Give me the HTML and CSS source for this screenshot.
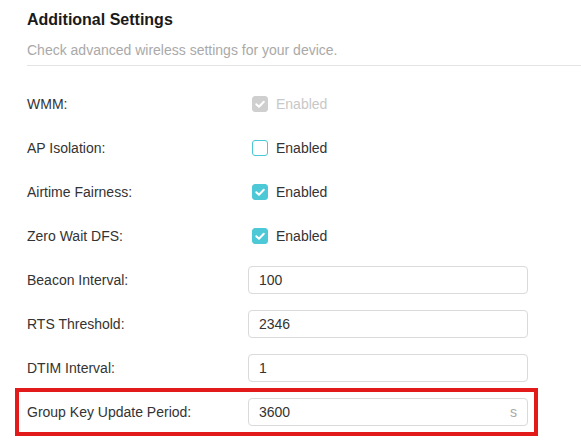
FILE: index.html
```html
<!DOCTYPE html>
<html>
<head>
<meta charset="utf-8">
<link rel="stylesheet" href="styles.css">
</head>
<body>
<div class="panel">
  <h2 class="title">Additional Settings</h2>
  <p class="subtitle">Check advanced wireless settings for your device.</p>
  <div class="divider"></div>
  <div class="form">
    <div class="row">
      <span class="label">WMM:</span>
      <span class="check disabled">
        <span class="box on"><svg viewBox="0 0 16 16" width="16" height="16"><path d="M4.3 8.2 L7 10.8 L11.8 5.8" fill="none" stroke="#fff" stroke-width="2" stroke-linecap="round" stroke-linejoin="round"/></svg></span>
        <span class="ctext">Enabled</span>
      </span>
    </div>
    <div class="row">
      <span class="label">AP Isolation:</span>
      <span class="check">
        <span class="box"></span>
        <span class="ctext">Enabled</span>
      </span>
    </div>
    <div class="row">
      <span class="label">Airtime Fairness:</span>
      <span class="check">
        <span class="box on"><svg viewBox="0 0 16 16" width="16" height="16"><path d="M4.3 8.2 L7 10.8 L11.8 5.8" fill="none" stroke="#fff" stroke-width="2" stroke-linecap="round" stroke-linejoin="round"/></svg></span>
        <span class="ctext">Enabled</span>
      </span>
    </div>
    <div class="row">
      <span class="label">Zero Wait DFS:</span>
      <span class="check">
        <span class="box on"><svg viewBox="0 0 16 16" width="16" height="16"><path d="M4.3 8.2 L7 10.8 L11.8 5.8" fill="none" stroke="#fff" stroke-width="2" stroke-linecap="round" stroke-linejoin="round"/></svg></span>
        <span class="ctext">Enabled</span>
      </span>
    </div>
    <div class="row">
      <span class="label">Beacon Interval:</span>
      <div class="field"><input class="input" type="text" value="100"></div>
    </div>
    <div class="row">
      <span class="label">RTS Threshold:</span>
      <div class="field"><input class="input" type="text" value="2346"></div>
    </div>
    <div class="row">
      <span class="label">DTIM Interval:</span>
      <div class="field"><input class="input" type="text" value="1"></div>
    </div>
    <div class="row highlight">
      <span class="label">Group Key Update Period:</span>
      <div class="field"><input class="input" type="text" value="3600"><span class="unit">s</span></div>
    </div>
  </div>
</div>
</body>
</html>
```
FILE: styles.css
```css
html, body {
  margin: 0;
  padding: 0;
  background: #fff;
}
body {
  font-family: "Liberation Sans", Arial, sans-serif;
  color: #333;
  width: 581px;
  height: 444px;
  overflow: hidden;
}
.panel {
  padding-left: 27px;
  padding-top: 10px;
}
.title {
  margin: 0;
  font-size: 16px;
  line-height: 20px;
  font-weight: bold;
  color: #1a1a1a;
}
.subtitle {
  margin: 10px 0 0;
  font-size: 14px;
  line-height: 20px;
  color: #a9a9a9;
}
.divider {
  margin-top: 5px;
  height: 1px;
  background: #e3e3e3;
}
.form {
  width: 501px;
  margin-top: 16px;
}
.row {
  display: flex;
  align-items: center;
  height: 44px;
  font-size: 14px;
}
.label {
  width: 221px;
  flex: none;
  color: #333;
}
.check {
  display: flex;
  align-items: center;
  gap: 8px;
  margin-left: 4px;
}
.box {
  width: 16px;
  height: 16px;
  box-sizing: border-box;
  border: 1px solid #4cc8d6;
  border-radius: 3px;
  background: #fff;
  display: block;
}
.box svg {
  display: block;
  margin: -1px;
}
.box.on {
  background: #4cc8d6;
}
.disabled .box.on {
  background: #cfcfcf;
  border-color: #cfcfcf;
}
.disabled .ctext {
  color: #c8c8c8;
}
.ctext {
  color: #333;
}
.field {
  width: 280px;
  height: 28px;
  box-sizing: border-box;
  border: 1px solid #dadada;
  border-radius: 4px;
  display: flex;
  align-items: center;
  padding: 0 10px;
  background: #fff;
}
.input {
  flex: 1;
  min-width: 0;
  border: none;
  outline: none;
  padding: 0;
  margin: 0;
  font-family: "Liberation Sans", Arial, sans-serif;
  font-size: 14px;
  color: #333;
  background: transparent;
}
.unit {
  color: #aaa;
  font-size: 14px;
}
.highlight {
  position: relative;
}
.highlight::after {
  content: "";
  position: absolute;
  top: -2px;
  bottom: -2px;
  left: -12px;
  right: -10px;
  border: 4px solid #e31a1a;
  pointer-events: none;
}
```
